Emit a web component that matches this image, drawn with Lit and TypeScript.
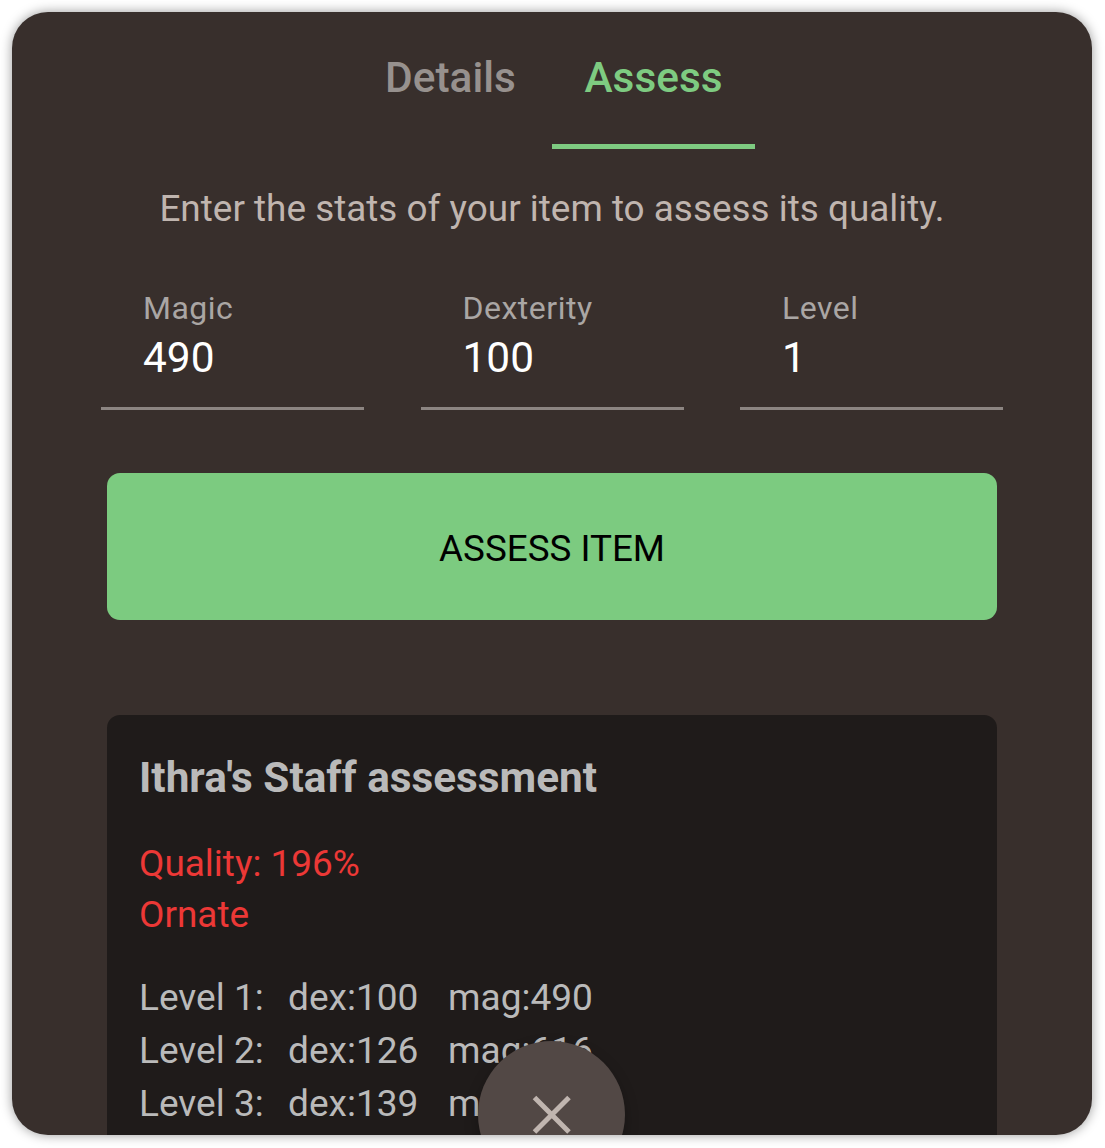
import { LitElement, html, css } from "lit";
import { customElement, property, state } from "lit/decorators.js";
import { classMap } from "lit/directives/class-map.js";

@customElement("stat-field")
class StatField extends LitElement {
  @property() label = "";
  @property() value = "";

  static styles = css`
    :host {
      display: block;
      box-sizing: border-box;
      width: 263px;
      height: 122px;
      padding-left: 42px;
      border-bottom: 3px solid #8c8582;
    }
    .label {
      font-size: 32px;
      line-height: 40px;
      letter-spacing: 0.5px;
      color: #aaa6a4;
    }
    .value {
      font-size: 42.4px;
      line-height: 59px;
      color: #fff;
    }
  `;

  render() {
    return html`<div class="label">${this.label}</div>
      <div class="value">${this.value}</div>`;
  }
}

@customElement("app-root")
class AppRoot extends LitElement {
  @state() private active = "Assess";

  private tabs = ["Details", "Assess"];
  private fields = [
    { label: "Magic", value: "490" },
    { label: "Dexterity", value: "100" },
    { label: "Level", value: "1" },
  ];
  private levels = [
    { level: 1, dex: 100, mag: 490 },
    { level: 2, dex: 126, mag: 616 },
    { level: 3, dex: 139, mag: 679 },
  ];

  static styles = css`
    :host {
      display: block;
      box-sizing: border-box;
      width: 1105px;
      height: 1148px;
      padding: 12px 13px 13px 12px;
      background: #fff;
      font-family: Roboto, sans-serif;
      overflow: hidden;
    }
    .card {
      position: relative;
      display: flex;
      flex-direction: column;
      height: 1123px;
      border-radius: 36px;
      background: #382f2c;
      box-shadow: 0 0 12px rgba(0, 0, 0, 0.4);
      overflow: hidden;
    }
    .tabs {
      display: flex;
      justify-content: center;
      height: 137px;
      flex: none;
    }
    .tab {
      box-sizing: border-box;
      width: 203px;
      border-bottom: 5px solid transparent;
      text-align: center;
      font-size: 42.4px;
      font-weight: 500;
      line-height: 132px;
      color: #97918e;
    }
    .tab.active {
      color: #7ecb81;
      border-bottom-color: #7ecb81;
    }
    .hint {
      margin-top: 34px;
      text-align: center;
      font-size: 36.9px;
      line-height: 52px;
      color: #c0b5af;
    }
    .fields {
      display: flex;
      justify-content: space-between;
      margin: 53px 89px 0;
    }
    .assess {
      box-sizing: border-box;
      height: 147px;
      margin: 63px 95px 0;
      padding-top: 4px;
      border-radius: 13px;
      background: #7ccb80;
      text-align: center;
      font-size: 36.8px;
      line-height: 144px;
      color: #000;
      flex: none;
    }
    .result {
      flex: 1;
      min-height: 0;
      margin: 95px 95px 0;
      padding: 38px 32px 0;
      border-radius: 13px 13px 0 0;
      background: #1f1b1a;
      color: #bababa;
      font-size: 37.05px;
    }
    .title {
      font-size: 42.3px;
      font-weight: 700;
      line-height: 50px;
    }
    .quality {
      margin-top: 35px;
      font-size: 36.95px;
      line-height: 51px;
      color: #ec3836;
    }
    .levels {
      display: grid;
      grid-template-columns: 149px 160px auto;
      justify-content: start;
      margin-top: 31px;
      line-height: 53px;
    }
    .close {
      position: absolute;
      left: 466px;
      top: 1029px;
      width: 147px;
      height: 147px;
      border-radius: 50%;
      background: #524845;
      box-shadow: 0 6px 14px rgba(0, 0, 0, 0.25);
    }
    .close svg {
      display: block;
      width: 147px;
      height: 147px;
    }
  `;

  render() {
    return html`
      <div class="card">
        <div class="tabs">
          ${this.tabs.map(
            (t) => html`<div
              class=${classMap({ tab: true, active: t === this.active })}
              @click=${() => (this.active = t)}
            >${t}</div>`
          )}
        </div>
        <div class="hint">Enter the stats of your item to assess its quality.</div>
        <div class="fields">
          ${this.fields.map(
            (f) => html`<stat-field .label=${f.label} .value=${f.value}></stat-field>`
          )}
        </div>
        <div class="assess">ASSESS ITEM</div>
        <div class="result">
          <div class="title">Ithra's Staff assessment</div>
          <div class="quality">
            <div>Quality: 196%</div>
            <div>Ornate</div>
          </div>
          <div class="levels">
            ${this.levels.map(
              (l) => html`<span>Level ${l.level}:</span><span>dex:${l.dex}</span><span>mag:${l.mag}</span>`
            )}
          </div>
        </div>
        <div class="close">
          <svg viewBox="0 0 147 147" fill="none" stroke="#c0b5af" stroke-width="5">
            <path d="M56.5 56.5L91 91M91 56.5L56.5 91" />
          </svg>
        </div>
      </div>
    `;
  }
}
